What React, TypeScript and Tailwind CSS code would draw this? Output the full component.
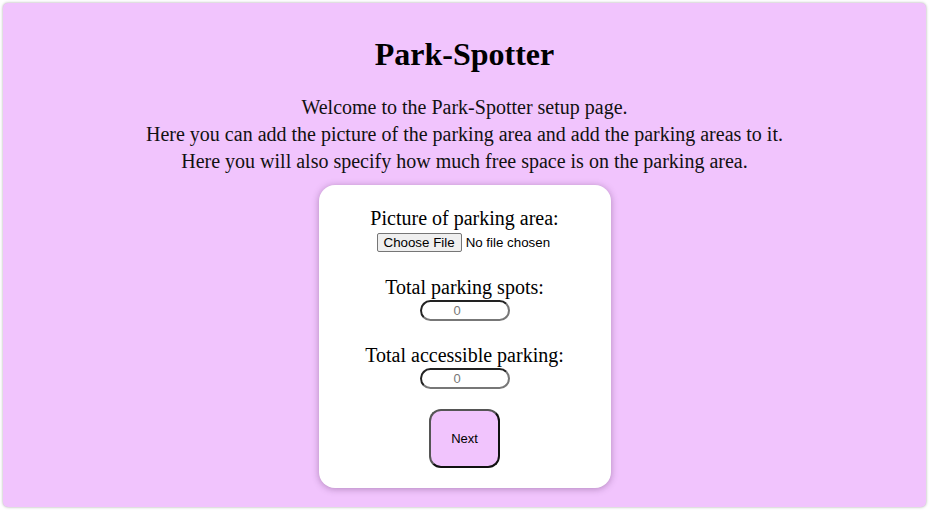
import React from "react";

export default function App() {
  return (
    <div className="w-[933px] h-[523px] bg-white pt-[3px] pl-[3px]">
      <div className="w-[923px] h-[504px] rounded-[5px] bg-[#f1c4fd] shadow-[0_0_3px_rgba(0,0,0,0.35)] flex flex-col items-center font-['Liberation_Serif',serif] text-black">
        <h1 className="mt-[33px] text-[32px] leading-[37px] font-bold">Park-Spotter</h1>
        <div className="mt-[21px] text-[20px] leading-[27px] text-center text-[#111]">
          <p>Welcome to the Park-Spotter setup page.</p>
          <p>Here you can add the picture of the parking area and add the parking areas to it.</p>
          <p>Here you will also specify how much free space is on the parking area.</p>
        </div>
        <div className="mt-[10px] w-[292px] rounded-[16px] bg-white shadow-[0_1px_7px_rgba(60,20,70,0.35)] flex flex-col items-center pt-[22px] pb-[20px]">
          <label className="text-[20px] leading-[23px]">Picture of parking area:</label>
          <input
            type="file"
            className="mt-[3px] w-[176px] font-['Liberation_Sans',sans-serif] text-[13.33px] leading-[15px] text-black file:mr-[4px] file:border file:border-[#767676] file:bg-[#efefef] file:rounded-[2px] file:px-[6px] file:py-[1px] file:text-black"
          />
          <label className="mt-[24px] text-[20px] leading-[23px]">Total parking spots:</label>
          <input
            type="number"
            placeholder="0"
            className="mt-[1px] w-[90px] h-[21px] rounded-full border-2 border-t-[#222] border-l-[#222] border-b-[#777] border-r-[#777] text-center font-['Liberation_Sans',sans-serif] text-[13px] placeholder:text-[#777] outline-none"
          />
          <label className="mt-[23px] text-[20px] leading-[23px]">Total accessible parking:</label>
          <input
            type="number"
            placeholder="0"
            className="mt-[1px] w-[90px] h-[21px] rounded-full border-2 border-t-[#222] border-l-[#222] border-b-[#777] border-r-[#777] text-center font-['Liberation_Sans',sans-serif] text-[13px] placeholder:text-[#777] outline-none"
          />
          <button className="mt-[20px] w-[71px] h-[59px] rounded-[12px] border-2 border-t-[#555] border-l-[#555] border-b-[#111] border-r-[#111] bg-[#f1c4fd] font-['Liberation_Sans',sans-serif] text-[13px] text-black">
            Next
          </button>
        </div>
      </div>
    </div>
  );
}
